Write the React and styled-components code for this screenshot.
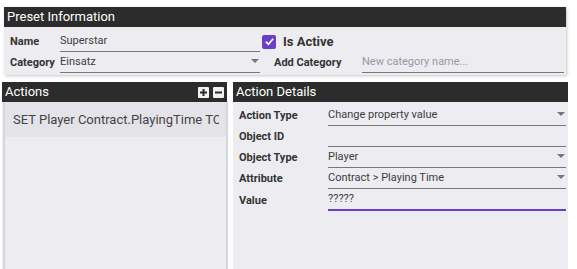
import React from "react";
import styled, { createGlobalStyle } from "styled-components";

const Global = createGlobalStyle`
  body {
    margin: 0;
    background: #ffffff;
    font-family: Roboto, "Liberation Sans", sans-serif;
  }
`;

const Page = styled.div`
  width: 577px;
  height: 269px;
  overflow: hidden;
  padding-top: 7px;
  box-sizing: border-box;
`;

const Panel = styled.section`
  background: #edecf1;
  box-shadow: 1px 1px 3px rgba(0, 0, 0, 0.22);
  display: flex;
  flex-direction: column;
`;

const TopPanel = styled(Panel)`
  margin-left: 4px;
  width: 562px;
  height: 68px;
`;

const Header = styled.div`
  height: 20px;
  background: #2c2c2c;
  color: #fff;
  font-size: 13px;
  line-height: 20px;
  padding-left: 3px;
  display: flex;
  align-items: center;
  justify-content: space-between;
  flex-shrink: 0;
`;

const TopBody = styled.div`
  display: grid;
  grid-template-columns: 250px 1fr;
  padding: 4px 2px 0 6px;
`;

const Field = styled.div`
  display: grid;
  grid-template-columns: ${({ labelW }) => labelW}px 1fr;
  align-items: center;
  height: ${({ h }) => h || 21}px;
  padding-left: ${({ indent }) => indent || 0}px;
`;

const Label = styled.label`
  font-size: 11px;
  font-weight: 700;
  color: #333;
  white-space: nowrap;
`;

const Input = styled.div`
  position: relative;
  height: 100%;
  display: flex;
  align-items: center;
  font-size: 11px;
  color: ${({ placeholder }) => (placeholder ? "#9a99a0" : "#3d3d3d")};
  border-bottom: ${({ active }) => (active ? "2px solid #6a3fc5" : "1px solid #77767c")};
  box-sizing: border-box;
  padding-bottom: 2px;
`;

const Arrow = styled.span`
  position: absolute;
  right: 1px;
  top: 50%;
  margin-top: -3px;
  width: 0;
  height: 0;
  border-left: 4px solid transparent;
  border-right: 4px solid transparent;
  border-top: 4px solid #77767c;
`;

const CheckRow = styled.div`
  display: flex;
  align-items: center;
  gap: 7px;
  height: 21px;
  padding-left: 2px;
`;

const Box = styled.span`
  width: 14px;
  height: 14px;
  border-radius: 2px;
  background: #6a3fc5;
  display: flex;
  align-items: center;
  justify-content: center;
`;

const CheckLabel = styled.span`
  font-size: 13px;
  font-weight: 700;
  color: #333;
`;

const Bottom = styled.div`
  display: grid;
  grid-template-columns: 225px 335px;
  gap: 6px;
  margin: 7px 0 0 2px;
`;

const ListPanel = styled(Panel)`
  height: 200px;
  box-shadow: none;
`;

const ListBody = styled.div`
  flex: 1;
  border-left: 2px solid #d7d6db;
  border-right: 2px solid #d7d6db;
  margin-left: 1px;
  margin-right: -1px;
`;

const ListItem = styled.div`
  height: 35px;
  background: #e4e3e8;
  padding: 0 7px 0 8px;
`;

const ItemText = styled.div`
  font-size: 13px;
  color: #444;
  line-height: 35px;
  white-space: nowrap;
  overflow: hidden;
`;

const Tools = styled.div`
  display: flex;
  gap: 4px;
  margin-right: 3px;
`;

const ToolBtn = styled.span`
  width: 11px;
  height: 11px;
  background: #f2f2f2;
  border-radius: 1px;
  display: flex;
  align-items: center;
  justify-content: center;
`;

const DetailBody = styled.div`
  padding: 3px 2px 0 6px;
`;

const Check = () => (
  <svg width="11" height="11" viewBox="0 0 12 12">
    <path d="M2 6.2 L4.8 9 L10 3" fill="none" stroke="#fff" strokeWidth="1.8" />
  </svg>
);

const Plus = () => (
  <svg width="9" height="9" viewBox="0 0 9 9">
    <path d="M4.5 1 V8 M1 4.5 H8" stroke="#2c2c2c" strokeWidth="2" />
  </svg>
);

const Minus = () => (
  <svg width="9" height="9" viewBox="0 0 9 9">
    <path d="M1 4.5 H8" stroke="#2c2c2c" strokeWidth="2" />
  </svg>
);

const details = [
  { label: "Action Type", value: "Change property value", select: true },
  { label: "Object ID", value: "" },
  { label: "Object Type", value: "Player", select: true },
  { label: "Attribute", value: "Contract > Playing Time", select: true },
  { label: "Value", value: "?????", active: true },
];

export default function App() {
  return (
    <>
      <Global />
      <Page>
        <TopPanel>
          <Header>Preset Information</Header>
          <TopBody>
            <div>
              <Field labelW={50}>
                <Label>Name</Label>
                <Input>Superstar</Input>
              </Field>
              <Field labelW={50}>
                <Label>Category</Label>
                <Input>
                  Einsatz
                  <Arrow />
                </Input>
              </Field>
            </div>
            <div>
              <CheckRow>
                <Box>
                  <Check />
                </Box>
                <CheckLabel>Is Active</CheckLabel>
              </CheckRow>
              <Field labelW={88} indent={14}>
                <Label>Add Category</Label>
                <Input placeholder>New category name...</Input>
              </Field>
            </div>
          </TopBody>
        </TopPanel>
        <Bottom>
          <ListPanel>
            <Header>
              Actions
              <Tools>
                <ToolBtn>
                  <Plus />
                </ToolBtn>
                <ToolBtn>
                  <Minus />
                </ToolBtn>
              </Tools>
            </Header>
            <ListBody>
              <ListItem>
                <ItemText>SET Player Contract.PlayingTime TO ?????</ItemText>
              </ListItem>
            </ListBody>
          </ListPanel>
          <ListPanel>
            <Header>Action Details</Header>
            <DetailBody>
              {details.map((d) => (
                <Field key={d.label} labelW={89} h={d.active ? 22 : 21}>
                  <Label>{d.label}</Label>
                  <Input active={d.active}>
                    {d.value}
                    {d.select && <Arrow />}
                  </Input>
                </Field>
              ))}
            </DetailBody>
          </ListPanel>
        </Bottom>
      </Page>
    </>
  );
}
